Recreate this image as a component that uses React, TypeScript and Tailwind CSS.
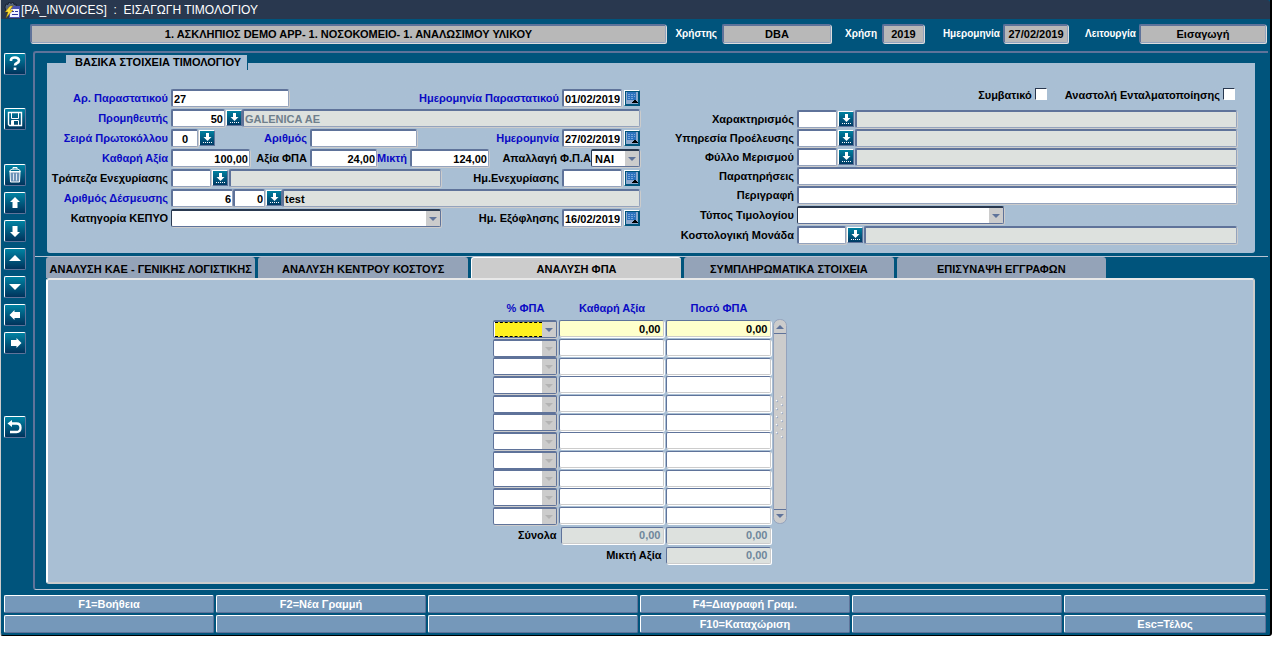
import type { ReactNode } from 'react';

const fieldBorder = 'h-[18px] border-t-2 border-l-2 border-r border-b border-[#5f739a] border-r-[#94a3bd] border-b-[#94a3bd] rounded-[2px] shadow-[1px_1px_0_#cccccc] px-px outline-none min-w-0';

interface FieldProps {
    id?: string;
    label?: string;
    value?: string;
    className?: string;
    readOnly?: boolean;
}

function Field({ id, label, value = '', className = '', readOnly = false }: FieldProps) {
    return (
        <input
            id={id}
            aria-label={label}
            defaultValue={value}
            readOnly={readOnly}
            className={`${fieldBorder} ${readOnly ? 'bg-[#dde1de]' : 'bg-white'} ${className}`}
        />
    );
}

function Label({ htmlFor, blue = false, className = '', children }: { htmlFor: string; blue?: boolean; className?: string; children: ReactNode }) {
    return (
        <label htmlFor={htmlFor} className={`shrink-0 whitespace-nowrap text-right mr-[3px] ${blue ? 'text-[#0a0ac4]' : 'text-black'} ${className}`}>
            {children}
        </label>
    );
}

function ListButton({ label }: { label: string }) {
    return (
        <button aria-label={label} className="w-4 h-4 shrink-0 ml-px border border-white border-r-[#5f739a] border-b-[#5f739a] bg-linear-to-b from-[#00809f] to-[#003a64]">
            <svg viewBox="0 0 14 14" className="w-full h-full block">
                <path d="M6 2h3v4h2.500L7.500 10 3.500 6H6z" fill="#fff" />
                <path d="M3 11.500h10" stroke="#fff" strokeDasharray="1 1" />
            </svg>
        </button>
    );
}

function DateButton({ label }: { label: string }) {
    return (
        <button aria-label={label} className="w-4 h-4 shrink-0 ml-[2px] border border-white border-r-[#00547c] border-b-[#00547c] bg-[#00547c]">
            <svg viewBox="0 0 14 14" className="w-full h-full block" shapeRendering="crispEdges">
                <rect x="1" y="1" width="12" height="12" fill="#8fa9cc" />
                <rect x="2" y="1" width="9" height="8" fill="#2d72bd" />
                <path d="M3 3.500h7M3 5.500h7M3 7.500h5" stroke="#79a5dc" strokeDasharray="2 1" />
                <path d="M9 9h2v1h1v1h1v1H7v-1h1v-1h1z" fill="#000" />
            </svg>
        </button>
    );
}

function Select({ id, label, value = '', className = '', tone = 'dark' }: { id?: string; label?: string; value?: string; className?: string; tone?: 'dark' | 'active' | 'off' }) {
    return (
        <div className={`relative h-[18px] ${className}`}>
            <select
                id={id}
                aria-label={label}
                defaultValue={value}
                className={`appearance-none block w-full h-full rounded-[2px] border border-[#5f739a] px-[3px] outline-none shadow-[1px_1px_0_#cccccc] ${
                    tone === 'dark' ? 'border-t-2 border-t-[#29384f] border-l-[#29384f] bg-white' : 'border-t-2 bg-white'
                }`}
            >
                <option value={value}>{value}</option>
            </select>
            {tone === 'active' && (
                <span className="absolute left-[2px] top-[2px] right-[15px] bottom-px bg-[#fff01e] border-y border-dashed border-black pointer-events-none" />
            )}
            <svg viewBox="0 0 14 15" className="absolute right-px top-[2px] w-[14px] h-[15px] pointer-events-none">
                <rect width="14" height="15" fill="#cccccc" />
                <path d="M3 6h8L7 10z" fill={tone === 'off' ? '#b3b3b3' : '#5f739a'} />
            </svg>
        </div>
    );
}

const toolGlyphs: { name: string; space: string; glyph: ReactNode }[] = [
    { name: 'Βοήθεια', space: 'mb-[33px]', glyph: <path d="M6 7V5.500Q6.500 3.500 10 3.500T14 6.200Q14 8 12 9T10 11.500M10 13.500v2.500" fill="none" stroke="#fff" strokeWidth="2.600" /> },
    {
        name: 'Αποθήκευση',
        space: 'mb-[34px]',
        glyph: (
            <g fill="none" stroke="#fff">
                <path d="M3.500 3.500h13v13h-12l-1-1z" strokeWidth="1.400" />
                <path d="M6.500 4v5.500h7V4M6.500 16v-4.500h7V16" />
                <path d="M8 12v4" strokeWidth="2" />
            </g>
        ),
    },
    {
        name: 'Διαγραφή',
        space: 'mb-[6px]',
        glyph: (
            <g>
                <path d="M5 7h10l-.5 10h-9z" fill="#6f93b8" stroke="#fff" />
                <path d="M4.500 6.500Q5 4 10 4t5.500 2.500zM8 4V2.500h4V4" fill="none" stroke="#fff" />
                <path d="M8.500 8.500v7M11.500 8.500v7" stroke="#dfe8f2" />
            </g>
        ),
    },
    { name: 'Προηγούμενη εγγραφή', space: 'mb-[6px]', glyph: <path d="M10 4l5 5h-2.500v6h-5V9H5z" fill="#fff" /> },
    { name: 'Επόμενη εγγραφή', space: 'mb-[6px]', glyph: <path d="M10 16l5-5h-2.500V5h-5v6H5z" fill="#fff" /> },
    { name: 'Προηγούμενη ομάδα', space: 'mb-[6px]', glyph: <path d="M10 6l6 6H4z" fill="#fff" /> },
    { name: 'Επόμενη ομάδα', space: 'mb-[6px]', glyph: <path d="M10 13L4 7h12z" fill="#fff" /> },
    { name: 'Αριστερά', space: 'mb-[6px]', glyph: <path d="M4.500 10l5-5v2h5.500v6H9.500v2z" fill="#fff" /> },
    { name: 'Δεξιά', space: 'mb-[62px]', glyph: <path d="M16.500 10l-5-5v2H6v6h5.500v2z" fill="#fff" /> },
    {
        name: 'Επιστροφή',
        space: '',
        glyph: (
            <g>
                <path d="M6 6.500h5.500q4 0 4 4.200t-4 4.300H5" fill="none" stroke="#fff" strokeWidth="2.300" />
                <path d="M2.500 6.500L7 3v7z" fill="#fff" />
            </g>
        ),
    },
];

function Toolbar() {
    return (
        <nav className="w-[29px] shrink-0 pl-[3px] pt-[2px] flex flex-col items-start">
            {toolGlyphs.map((t) => (
                <button
                    key={t.name}
                    aria-label={t.name}
                    className={`w-[22px] h-[22px] shrink-0 rounded-[2px] border border-white border-r-[#5f739a] border-b-[#5f739a] bg-linear-to-b from-[#0083a3] to-[#00335c] ${t.space}`}
                >
                    <svg viewBox="0 0 20 20" className="block w-full h-full">{t.glyph}</svg>
                </button>
            ))}
        </nav>
    );
}

function HeaderBox({ label, value, className }: { label: string; value: string; className: string }) {
    return (
        <input
            aria-label={label}
            readOnly
            value={value}
            className={`h-[19px] min-w-0 text-center border-2 border-[#5f739a] border-r border-b border-r-[#94a3bd] border-b-[#94a3bd] rounded-[2px] bg-[#b8b8b8] text-black shadow-[1px_1px_0_#dddddd] outline-none ${className}`}
        />
    );
}

function LeftForm() {
    return (
        <div className="w-[593px] shrink-0 [&>div]:h-5 [&>div]:flex [&>div]:items-center">
            <div>
                <Label htmlFor="docNo" blue className="w-[121px]">Αρ. Παραστατικού</Label>
                <Field id="docNo" value="27" className="w-[118px]" />
                <Label htmlFor="docDate" blue className="ml-auto">Ημερομηνία Παραστατικού</Label>
                <Field id="docDate" value="01/02/2019" className="w-[60px]" />
                <DateButton label="Ημερολόγιο παραστατικού" />
            </div>
            <div>
                <Label htmlFor="supplier" blue className="w-[121px]">Προμηθευτής</Label>
                <Field id="supplier" value="50" className="w-[54px] text-right" />
                <ListButton label="Λίστα προμηθευτών" />
                <Field label="Επωνυμία προμηθευτή" value="GALENICA AE" readOnly className="flex-1 text-[#6f7f8c]" />
            </div>
            <div>
                <Label htmlFor="series" blue className="w-[121px]">Σειρά Πρωτοκόλλου</Label>
                <Field id="series" value="0" className="w-[27px] text-center" />
                <ListButton label="Λίστα σειρών" />
                <Label htmlFor="protNo" blue className="w-[92px]">Αριθμός</Label>
                <Field id="protNo" className="w-[107px]" />
                <Label htmlFor="protDate" blue className="ml-auto">Ημερομηνία</Label>
                <Field id="protDate" value="27/02/2019" className="w-[60px]" />
                <DateButton label="Ημερολόγιο πρωτοκόλλου" />
            </div>
            <div>
                <Label htmlFor="net" blue className="w-[121px]">Καθαρή Αξία</Label>
                <Field id="net" value="100,00" className="w-[79px] text-right" />
                <Label htmlFor="vat" className="w-[57px]">Αξία ΦΠΑ</Label>
                <Field id="vat" value="24,00" className="w-[67px] text-right" />
                <Label htmlFor="gross" blue className="w-[30px]">Μικτή</Label>
                <Field id="gross" value="124,00" className="w-[79px] text-right" />
                <label htmlFor="exempt" className="ml-auto whitespace-nowrap">Απαλλαγή Φ.Π.Α</label>
                <Select id="exempt" value="ΝΑΙ" className="w-[49px]" />
            </div>
            <div>
                <Label htmlFor="bank" className="w-[121px]">Τράπεζα Ενεχυρίασης</Label>
                <Field id="bank" className="w-[40px]" />
                <ListButton label="Λίστα τραπεζών" />
                <Field label="Όνομα τράπεζας" readOnly className="w-[212px] ml-px" />
                <Label htmlFor="pledgeDate" className="ml-auto">Ημ.Ενεχυρίασης</Label>
                <Field id="pledgeDate" className="w-[60px]" />
                <DateButton label="Ημερολόγιο ενεχυρίασης" />
            </div>
            <div>
                <Label htmlFor="commit" blue className="w-[121px]">Αριθμός Δέσμευσης</Label>
                <Field id="commit" value="6" className="w-[62px] text-right" />
                <Field label="Υποαριθμός δέσμευσης" value="0" className="w-[32px] text-right" />
                <ListButton label="Λίστα δεσμεύσεων" />
                <Field label="Περιγραφή δέσμευσης" value="test" readOnly className="flex-1" />
            </div>
            <div>
                <Label htmlFor="kepyo" className="w-[121px]">Κατηγορία ΚΕΠΥΟ</Label>
                <Select id="kepyo" className="w-[270px]" />
                <Label htmlFor="payDate" className="ml-auto">Ημ. Εξόφλησης</Label>
                <Field id="payDate" value="16/02/2019" className="w-[60px]" />
                <DateButton label="Ημερολόγιο εξόφλησης" />
            </div>
        </div>
    );
}

const lookups = ['Χαρακτηρισμός', 'Υπηρεσία Προέλευσης', 'Φύλλο Μερισμού'];

const checkbox = 'appearance-none w-3 h-3 ml-[3px] bg-white border border-[#29384f] border-r-white border-b-white';

function RightForm() {
    return (
        <div className="flex-1 min-w-0">
            <div className="h-[21px] flex items-start justify-end pr-[2px]">
                <label htmlFor="conv">Συμβατικό</label>
                <input id="conv" type="checkbox" className={checkbox} />
                <label htmlFor="suspend" className="ml-[18px]">Αναστολή Ενταλματοποίησης</label>
                <input id="suspend" type="checkbox" className={checkbox} />
            </div>
            {lookups.map((l) => (
                <div key={l} className="h-[19px] flex items-center">
                    <Label htmlFor={l} className="w-[154px]">{l}</Label>
                    <Field id={l} className="w-[40px]" />
                    <ListButton label={`Λίστα ${l}`} />
                    <Field label={`${l} περιγραφή`} readOnly className="flex-1 ml-px" />
                </div>
            ))}
            <div className="h-[19px] flex items-center">
                <Label htmlFor="notes" className="w-[154px]">Παρατηρήσεις</Label>
                <Field id="notes" className="flex-1" />
            </div>
            <div className="h-5 flex items-center">
                <Label htmlFor="descr" className="w-[154px]">Περιγραφή</Label>
                <Field id="descr" className="flex-1" />
            </div>
            <div className="h-5 flex items-center">
                <Label htmlFor="invType" className="w-[154px]">Τύπος Τιμολογίου</Label>
                <Select id="invType" className="w-[207px]" />
            </div>
            <div className="h-5 flex items-center">
                <Label htmlFor="costUnit" className="w-[154px]">Κοστολογική Μονάδα</Label>
                <Field id="costUnit" className="w-[49px]" />
                <ListButton label="Λίστα μονάδων" />
                <Field label="Περιγραφή μονάδας" readOnly className="flex-1 ml-px" />
            </div>
        </div>
    );
}

const tabs = ['ΑΝΑΛΥΣΗ ΚΑΕ - ΓΕΝΙΚΗΣ ΛΟΓΙΣΤΙΚΗΣ', 'ΑΝΑΛΥΣΗ ΚΕΝΤΡΟΥ ΚΟΣΤΟΥΣ', 'ΑΝΑΛΥΣΗ ΦΠΑ', 'ΣΥΜΠΛΗΡΩΜΑΤΙΚΑ ΣΤΟΙΧΕΙΑ', 'ΕΠΙΣΥΝΑΨΗ ΕΓΓΡΑΦΩΝ'];

const rows = Array.from({ length: 11 }, (_, i) => i);

const cell = 'block w-full h-[17px] border border-[#5f739a] border-r-[#cccccc] border-b-[#cccccc] rounded-[2px] shadow-[1px_1px_0_#ffffff] px-[2px] text-right outline-none';

function VatTable() {
    return (
        <div className="flex justify-center pr-[22px] pt-[19px]">
            <table className="table-fixed w-[280px] border-collapse">
                <thead>
                    <tr className="h-5 text-[#0a0ac4]">
                        <th className="w-[66px] pb-[2px]">% ΦΠΑ</th>
                        <th className="w-[107px] pb-[2px]">Καθαρή Αξία</th>
                        <th className="w-[107px] pb-[2px]">Ποσό ΦΠΑ</th>
                    </tr>
                </thead>
                <tbody>
                    {rows.map((i) => (
                        <tr key={i} className="h-[19px] nth-[3n]:h-[18px]">
                            <td className="p-0 pr-[2px]">
                                <Select label={`% ΦΠΑ ${i + 1}`} tone={i === 0 ? 'active' : 'off'} />
                            </td>
                            <td className="p-0 pr-[2px]">
                                <input aria-label={`Καθαρή αξία ${i + 1}`} defaultValue={i === 0 ? '0,00' : ''} className={`${cell} ${i === 0 ? 'bg-[#ffffcc]' : 'bg-white'}`} />
                            </td>
                            <td className="p-0 pr-[2px]">
                                <input aria-label={`Ποσό ΦΠΑ ${i + 1}`} defaultValue={i === 0 ? '0,00' : ''} className={`${cell} ${i === 0 ? 'bg-[#ffffcc]' : 'bg-white'}`} />
                            </td>
                        </tr>
                    ))}
                </tbody>
                <tfoot>
                    <tr className="h-5">
                        <th className="p-0 pr-[2px] text-right">Σύνολα</th>
                        <td className="p-0 pl-[2px] pr-[2px]">
                            <input aria-label="Σύνολο καθαρής αξίας" readOnly value="0,00" className={`${cell} bg-[#dde1de] text-[#6f879c]`} />
                        </td>
                        <td className="p-0 pr-[2px]">
                            <input aria-label="Σύνολο ΦΠΑ" readOnly value="0,00" className={`${cell} bg-[#dde1de] text-[#6f879c]`} />
                        </td>
                    </tr>
                    <tr className="h-5">
                        <th colSpan={2} className="p-0 pr-[4px] text-right">Μικτή Αξία</th>
                        <td className="p-0 pr-[2px]">
                            <input aria-label="Μικτή αξία" readOnly value="0,00" className={`${cell} bg-[#dde1de] text-[#6f879c]`} />
                        </td>
                    </tr>
                </tfoot>
            </table>
            <svg viewBox="0 0 14 205" className="w-[14px] h-[205px] mt-5">
                <rect x=".5" y=".5" width="13" height="204" rx="6" fill="#cccccc" stroke="#94a3bd" />
                <path d="M1 14.500h12M1 190.500h12" stroke="#5f739a" />
                <path d="M3 10h8L7 6zM3 195h8l-4 4z" fill="#5f739a" />
                {rows.map((i) => (
                    <g key={i}>
                        <circle cx={i % 2 ? 4 : 9} cy={78 + i * 4} r="1.200" fill="#94a3bd" />
                        <circle cx={i % 2 ? 3.6 : 8.6} cy={77.6 + i * 4} r="0.900" fill="#fff" />
                    </g>
                ))}
            </svg>
        </div>
    );
}

const keys = ['F1=Βοήθεια', 'F2=Νέα Γραμμή', '', 'F4=Διαγραφή Γραμ.', '', '', '', '', '', 'F10=Καταχώριση', '', 'Esc=Τέλος'];

export default function App() {
    return (
        <div className="bg-white font-['Liberation_Sans',Arial,sans-serif] text-[11px] leading-[14px] font-bold text-black">
            <div className="bg-[#00547c] rounded-b-[3px] border-l border-l-[#cccccc] border-r-2 border-r-black border-b border-b-black">
                <header className="h-[19px] bg-[#29384f] rounded-tr-[3px] flex items-center pl-[3px] text-white text-[12px] font-normal whitespace-pre">
                    <svg viewBox="0 0 16 16" className="w-4 h-4 mr-px shrink-0">
                        <path d="M1 5L2 2l2 .5L5 0l2 1.500L9 0l1 2.500 2-.5V6l-3 4H2z" fill="#56657f" stroke="#0b1220" strokeWidth=".7" />
                        <rect x="5.500" y="4.500" width="10" height="11" fill="#f4f4ff" stroke="#4a52b0" />
                        <path d="M6 6h9" stroke="#4a52b0" strokeWidth="2" />
                        <path d="M8 9.500h2M11 9.500h3M8 12.500h6" stroke="#3038a0" />
                        <path d="M6 4L1 10h3l-2 6 7-8H6l3-4z" fill="#ffdf38" stroke="#7a5c00" strokeWidth=".5" />
                    </svg>
                    <h1>[PA_INVOICES]  :  ΕΙΣΑΓΩΓΗ ΤΙΜΟΛΟΓΙΟΥ</h1>
                </header>

                <div className="pl-[29px] pr-1 pt-[5px] flex items-center text-white text-[10px]">
                    <HeaderBox label="Οργανισμός" value="1. ΑΣΚΛΗΠΙΟΣ DEMO APP- 1. ΝΟΣΟΚΟΜΕΙΟ- 1. ΑΝΑΛΩΣΙΜΟΥ ΥΛΙΚΟΥ" className="flex-1 text-[11px]" />
                    <span className="w-[56px] text-right pr-[5px]">Χρήστης</span>
                    <HeaderBox label="Χρήστης" value="DBA" className="w-[109px] text-[11px]" />
                    <span className="w-[51px] text-right pr-[5px]">Χρήση</span>
                    <HeaderBox label="Χρήση" value="2019" className="w-[42px] text-[11px]" />
                    <span className="w-[79px] text-right pr-[3px]">Ημερομηνία</span>
                    <HeaderBox label="Ημερομηνία" value="27/02/2019" className="w-[65px] text-[11px]" />
                    <span className="w-[71px] text-right pr-[3px]">Λειτουργία</span>
                    <HeaderBox label="Λειτουργία" value="Εισαγωγή" className="w-[127px] text-[11px]" />
                </div>

                <div className="flex pt-2">
                    <Toolbar />
                    <main className="flex-1 min-w-0 ml-[3px] border-l-2 border-t-2 border-[#5f739a] border-b border-b-[#b8c4d4] rounded-l-[3px] pb-[5px] mr-[2px]">
                        <section aria-labelledby="basics" className="ml-3 mr-[13px] mt-[2px] mb-[3px] bg-linear-to-b from-transparent from-[8px] to-[#a9bfd4] to-[8px] rounded-b-[3px] pb-[8px]">
                            <h2 id="basics" className="h-[15px] ml-[19px] w-fit pl-[9px] pr-[6px] bg-[#a9bfd4] border-r border-[#00547c]">ΒΑΣΙΚΑ ΣΤΟΙΧΕΙΑ ΤΙΜΟΛΟΓΙΟΥ</h2>
                            <div className="flex pr-[18px] pt-[18px]">
                                <LeftForm />
                                <RightForm />
                            </div>
                        </section>

                        <div role="tablist" className="flex gap-[3px] border-t border-[#b8c4d4] pl-[11px] pr-[162px]">
                            {tabs.map((t, i) => (
                                <button
                                    key={t}
                                    role="tab"
                                    aria-selected={i === 2}
                                    className={`flex-1 h-[21px] pt-[2px] whitespace-nowrap rounded-t-[3px] ${i === 2 ? 'bg-[#cccccc] border-t border-l border-white' : 'bg-[#94a3b8]'}`}
                                >
                                    {t}
                                </button>
                            ))}
                        </div>
                        <section className="ml-[11px] mr-[13px] bg-[#a9bfd4] border-2 border-[#cccccc] border-t-[#e8e8e8] border-l-white rounded-[3px] pb-[17px]">
                            <VatTable />
                        </section>
                    </main>
                </div>

                <footer className="grid grid-cols-[repeat(5,minmax(0,210fr))_minmax(0,202fr)] gap-[2px] pt-[5px] pb-[2px] pl-[3px] pr-1 text-white">
                    {keys.map((k, i) => (
                        <button key={i} aria-label={k || 'Κενό'} className="h-[18px] bg-[#7598ba] border border-white border-r-[#5f739a] border-b-[#5f739a] rounded-[2px]">
                            {k}
                        </button>
                    ))}
                </footer>
            </div>
        </div>
    );
}
